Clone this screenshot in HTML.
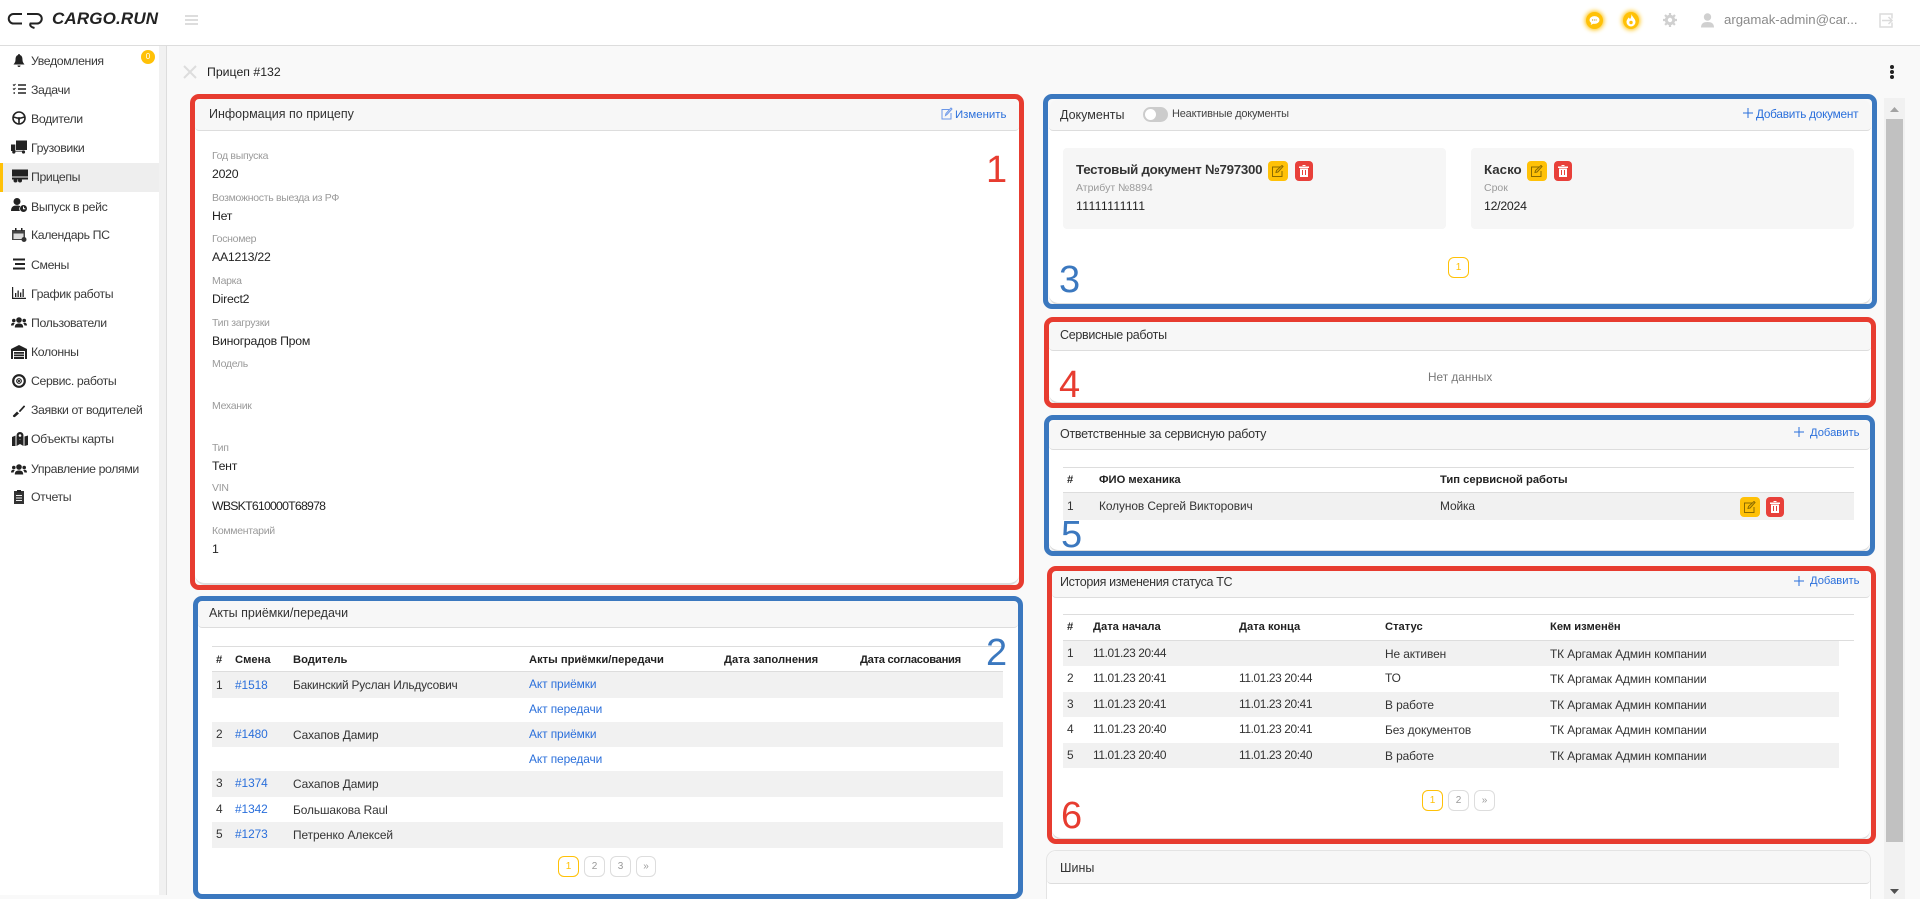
<!DOCTYPE html>
<html lang="ru"><head><meta charset="utf-8"><title>Прицеп #132</title>
<style>
*{box-sizing:border-box}
html,body{margin:0;padding:0;width:1920px;height:899px;overflow:hidden;background:#f9f9f9;font-family:"Liberation Sans","Noto Sans CJK SC",sans-serif;color:#333}
div,span,a,svg{position:absolute}
.t{white-space:nowrap;line-height:20px;height:20px;font-size:12px}
.s{left:31px;font-size:12.3px;color:#3a3a3a;letter-spacing:-.38px}
.i{left:11px;width:16px;height:16px}
.c{background:#fff;border-radius:10px;border-bottom:2px solid #ddd}
.h{left:0;top:0;right:0;background:#f7f7f7;border-bottom:1px solid #ddd;border-radius:10px 10px 4px 4px;box-sizing:border-box}
.f{border:5px solid;border-radius:9px}
.r{border-color:#e73c30}.b{border-color:#3b78bf}
.n{font-size:38px;line-height:40px;height:40px;white-space:nowrap}
.l{left:212px;font-size:10.5px;color:#9a9a9a;letter-spacing:-.3px}
.v{left:212px;font-size:12.3px;color:#222;letter-spacing:-.25px}
.th{font-weight:bold;font-size:11.2px;color:#222}
.td{font-size:11.9px;color:#333;letter-spacing:-.08px}
.d{letter-spacing:-.38px}
.a{color:#2a6fdb;text-decoration:none}
.row{background:#f1f1f1}
.ln{height:1px;background:#ddd}
.p{width:21px;height:21px;border:1px solid #ddd;border-radius:6px;background:#fff;color:#999;font-size:10px;line-height:19px;text-align:center}
.pa{border-color:#ffc107;color:#ffc107}
.by{width:20px;height:20px;background:#ffc107;border-radius:4px}
.br{width:18px;height:20px;background:#e8403a;border-radius:4px}
</style></head><body>

<!-- top bar -->
<div style="left:0;top:0;width:1920px;height:46px;background:#fff;border-bottom:1px solid #ddd"></div>
<svg style="left:6px;top:10px" width="40" height="20" viewBox="0 0 40 20" fill="none" stroke="#222" stroke-width="2"><path d="M16 4H7.500a4.300 4.300 0 0 0 0 9.500H16"/><path d="M21 4h10a4.500 4.500 0 0 1 0 9.500H24.500q-1.500 3 4 4.500"/></svg>
<div class="t" style="left:52px;top:9px;font-size:17px;font-weight:bold;font-style:italic;color:#222;letter-spacing:.15px">CARGO.RUN</div>
<div style="left:185px;top:15px;width:13px;height:10px;border-top:2px solid #ddd;border-bottom:2px solid #ddd"></div>
<div style="left:185px;top:19px;width:13px;height:2px;background:#ddd"></div>

<div style="left:1586px;top:12px;width:17px;height:17px;border-radius:50%;background:#ffc107;box-shadow:0 0 5px 1px #ffc107"></div>
<svg style="left:1589px;top:15px" width="11" height="11" viewBox="0 0 11 11"><ellipse cx="5.500" cy="5" rx="5" ry="3.900" fill="#fff"/><path d="M3 5h5" stroke="#c9a33c" stroke-width="1.200" stroke-dasharray="1 .8"/><path d="M2.500 7.500l-.8 2.500 3-1.500z" fill="#fff"/></svg>
<div style="left:1623px;top:12px;width:16px;height:17px;border-radius:50%;background:#ffc107;box-shadow:0 0 5px 1px #ffc107"></div>
<svg style="left:1625px;top:13px" width="12" height="14" viewBox="0 0 12 14"><path d="M6.500 1C7 4 10.500 5.500 10.500 9a4.500 4.500 0 0 1-9 0C1.500 7 3 5.800 3.500 4.500 4.500 5 5 6 5 6 6 5 6.500 3 6.500 1z" fill="#fff"/><circle cx="6" cy="9.500" r="1.700" fill="#ffc107"/></svg>
<svg style="left:1663px;top:13px" width="14" height="14" viewBox="0 0 14 14"><circle cx="7" cy="7" r="3.700" fill="none" stroke="#d0d0d0" stroke-width="3"/><path d="M7 0v14M0 7h14M2 2l10 10M12 2L2 12" stroke="#d0d0d0" stroke-width="2.200" stroke-dasharray="2.200 9.600"/></svg>
<svg style="left:1700px;top:13px" width="15" height="15" viewBox="0 0 15 15" fill="#d0d0d0"><circle cx="7.500" cy="4" r="3.700"/><path d="M1 14.500c0-4 2.500-5.500 6.500-5.500s6.500 1.500 6.500 5.500z"/></svg>
<div class="t" style="left:1724px;top:10px;font-size:13.2px;color:#8a8a8a">argamak-admin@car...</div>
<svg style="left:1879px;top:13px" width="15" height="15" viewBox="0 0 15 15" fill="none" stroke="#dcdcdc" stroke-width="1.500"><path d="M9 1H1v13h12V9.500M13 5.500V1H9M3 7.500h10M9.500 4l3.500 3.500-3.500 3.500"/></svg>

<!-- sidebar -->
<div style="left:0;top:46px;width:159px;height:849px;background:#fff"></div>
<div style="left:159px;top:46px;width:7px;height:849px;background:#f1f1f1"></div>
<div style="left:166px;top:46px;width:1px;height:849px;background:#ddd"></div>
<div style="left:0;top:163px;width:159px;height:29px;background:#eee"></div>
<div style="left:0;top:163px;width:3px;height:29px;background:#ffc107"></div>
<div style="left:141px;top:50px;width:14px;height:14px;border-radius:50%;background:#ffc107;color:#fff;font-size:8px;line-height:14px;text-align:center">0</div>

<svg class="i" style="top:53px" viewBox="0 0 16 16" fill="#222"><path d="M8 2c-3 0-3.500 2.500-3.500 5 0 2-1 3-2 4.500h11c-1-1.500-2-2.500-2-4.500 0-2.500-.5-5-3.500-5z"/><path d="M6.500 12.500a1.500 1.500 0 0 0 3 0z"/><circle cx="8" cy="2" r="1"/></svg>
<div class="t s" style="top:51px">Уведомления</div>
<svg class="i" style="top:81px" viewBox="0 0 16 16" fill="none" stroke="#222" stroke-width="1.500"><path d="M7 4h8M7 8h8M7 12h8"/><path d="M2 3.500l1 1 1.500-1.500M2 7.500l1 1L4.500 7" stroke-width="1"/><path d="M2.500 12h1.500" stroke-width="1.500"/></svg>
<div class="t s" style="top:80px">Задачи</div>
<svg class="i" style="top:110px" viewBox="0 0 16 16" fill="none" stroke="#222" stroke-width="1.600"><circle cx="8" cy="8" r="6"/><path d="M2.500 7l3.500 1 2 0 2 0 3.500-1M8 9v5"/><circle cx="8" cy="8.500" r="1.300" fill="#222" stroke="none"/></svg>
<div class="t s" style="top:109px">Водители</div>
<svg class="i" style="top:139px" viewBox="0 0 16 16" fill="#222"><rect x="5" y="1.500" width="11" height="9.500"/><path d="M0 5.500h4.300V12H0z"/><circle cx="2.800" cy="13" r="1.600"/><circle cx="12.500" cy="13" r="1.600"/><path d="M3 11.800h10v.8H3z"/></svg>
<div class="t s" style="top:138px">Грузовики</div>
<svg class="i" style="top:168px;left:12px" viewBox="0 0 16 16" fill="#222"><rect x="0" y="1.500" width="16" height="7"/><rect x="0" y="9.500" width="16" height="2"/><circle cx="3.500" cy="12.500" r="2"/><circle cx="8" cy="12.500" r="2"/></svg>
<div class="t s" style="top:167px">Прицепы</div>
<svg class="i" style="top:197px" viewBox="0 0 16 16" fill="#222"><circle cx="6" cy="4.500" r="3.500"/><path d="M0 14c0-4 2-5.500 6-5.500 1.500 0 2.500.3 3.300.7A4 4 0 0 0 9 14z"/><circle cx="12.500" cy="11.500" r="3.500"/><path d="M12.500 9.500v2.300h1.800" stroke="#fff" fill="none"/></svg>
<div class="t s" style="top:197px">Выпуск в рейс</div>
<svg class="i" style="top:227px;left:12px" viewBox="0 0 16 16" fill="#444"><path d="M0 3h13v10H0z"/><path d="M3 1h1.500v3H3zM9 1h1.500v3H9z" fill="#222"/><path d="M1.500 6.500h10V12h-10z" fill="#ddd"/><circle cx="12" cy="12.500" r="2.500" fill="#333"/></svg>
<div class="t s" style="top:225px">Календарь ПС</div>
<svg class="i" style="top:256px" viewBox="0 0 16 16" fill="#222"><path d="M2 2.500h12v2H2zM4 7h10v2H4zM2 11.500h12v2H2z"/></svg>
<div class="t s" style="top:255px">Смены</div>
<svg class="i" style="top:285px" viewBox="0 0 16 16" fill="#222"><path d="M1 2h1.200v10.800H15V14H1zM4 8h1.300v4H4zM6.500 5.500h1.300V12H6.500zM9 7.500h1.300V12H9zM11.500 4h1.300v8h-1.300z"/></svg>
<div class="t s" style="top:284px">График работы</div>
<svg class="i" style="top:314px" viewBox="0 0 16 16" fill="#222"><circle cx="8" cy="6" r="2.800"/><circle cx="2.800" cy="6.500" r="1.800"/><circle cx="13.200" cy="6.500" r="1.800"/><path d="M3.800 13.500c0-3 1.500-4 4.200-4s4.200 1 4.200 4zM0 11.500c0-1.800.8-2.800 2.500-2.800.6 0 1 .1 1.400.4-.8.700-1.200 1.400-1.300 2.400zM16 11.500c0-1.800-.8-2.800-2.500-2.800-.6 0-1 .1-1.400.4.800.7 1.200 1.400 1.300 2.400z"/></svg>
<div class="t s" style="top:313px">Пользователи</div>
<svg class="i" style="top:344px" viewBox="0 0 16 16" fill="#222"><path d="M0 15V5l8-4 8 4v10h-2V7H2v8z"/><path d="M3 8h10v1.800H3zM3 10.500h10v1.800H3zM3 13h10v2H3z"/></svg>
<div class="t s" style="top:342px">Колонны</div>
<svg class="i" style="top:373px" viewBox="0 0 16 16" fill="none" stroke="#222"><circle cx="8" cy="8" r="5.800" stroke-width="2.200"/><circle cx="8" cy="8" r="2.300" stroke-width="1.200"/><circle cx="8" cy="8" r=".6" fill="#222"/></svg>
<div class="t s" style="top:371px">Сервис. работы</div>
<svg class="i" style="top:402px" viewBox="0 0 16 16" fill="#222"><path d="M2 13.500l4-4 2 2-4 3.500c-1 .5-2.500-.5-2-1.500z"/><path d="M8 9l5-5.500 1 1L9 10z" stroke="#222" stroke-width=".4"/></svg>
<div class="t s" style="top:400px">Заявки от водителей</div>
<svg class="i" style="top:431px;left:12px" viewBox="0 0 16 16" fill="#222"><path d="M0 6l3.500-1.500V15L0 15zM4.500 5.500L6 5l2 4 2-4 1.500.5v9.500L8 13l-3.500 2zM12.500 5.500L16 4.500V14l-3.500 1z"/><circle cx="8" cy="4.500" r="3.500"/><circle cx="8" cy="4.500" r="1.300" fill="#fff"/></svg>
<div class="t s" style="top:429px">Объекты карты</div>
<svg class="i" style="top:461px" viewBox="0 0 16 16" fill="#222"><circle cx="8" cy="6" r="2.800"/><circle cx="2.800" cy="6.500" r="1.800"/><circle cx="13.200" cy="6.500" r="1.800"/><path d="M3.800 13.500c0-3 1.500-4 4.200-4s4.200 1 4.200 4zM0 11.500c0-1.800.8-2.800 2.500-2.800.6 0 1 .1 1.400.4-.8.700-1.200 1.400-1.300 2.400zM16 11.500c0-1.800-.8-2.800-2.500-2.800-.6 0-1 .1-1.400.4.800.7 1.200 1.400 1.300 2.400z"/></svg>
<div class="t s" style="top:459px">Управление ролями</div>
<svg class="i" style="top:489px;left:11px" viewBox="0 0 16 16" fill="#333"><path d="M3 2h10v13H3z"/><path d="M6 1h4v2.500H6z" fill="#222"/><path d="M5 6h6v1H5zM5 8.500h6v1H5zM5 11h6v1H5z" fill="#eee"/></svg>
<div class="t s" style="top:487px">Отчеты</div>

<!-- title -->
<svg style="left:183px;top:65px" width="14" height="14" viewBox="0 0 14 14" stroke="#ddd" stroke-width="2"><path d="M1 1l12 12M13 1L1 13"/></svg>
<div class="t" style="left:207px;top:62px;font-size:12.3px;color:#222">Прицеп #132</div>
<div style="left:1890px;top:65px;width:4px;height:4px;border-radius:50%;background:#222"></div>
<div style="left:1890px;top:70px;width:4px;height:4px;border-radius:50%;background:#222"></div>
<div style="left:1890px;top:75px;width:4px;height:4px;border-radius:50%;background:#222"></div>

<!-- scrollbar -->
<div style="left:1884px;top:98px;width:21px;height:801px;background:#f1f1f1"></div>
<div style="left:1886px;top:119px;width:17px;height:723px;background:#c1c1c1"></div>
<svg style="left:1889px;top:106px" width="11" height="7" viewBox="0 0 11 7"><path d="M5.500 1L10 6H1z" fill="#a3a3a3"/></svg>
<svg style="left:1889px;top:888px" width="11" height="7" viewBox="0 0 11 7"><path d="M5.500 6L10 1H1z" fill="#505050"/></svg>

<!-- card 1 -->
<div class="c" style="left:195px;top:99px;width:824px;height:486px"><div class="h" style="height:32px"></div></div>
<div class="t" style="left:209px;top:104px;font-size:12.5px">Информация по прицепу</div>
<svg style="left:941px;top:107px" width="12" height="13" viewBox="0 0 12 13" fill="none" stroke="#6b97e8"><path d="M8 2.500H1v9.500h9V6"/><path d="M4.500 8.500l.5-2L10 1l1 1-5 5.500z"/></svg>
<div class="t a" style="left:955px;top:105px;font-size:11.4px">Изменить</div>
<div class="t l" style="top:146px">Год выпуска</div><div class="t v" style="top:164px">2020</div>
<div class="t l" style="top:188px">Возможность выезда из РФ</div><div class="t v" style="top:206px">Нет</div>
<div class="t l" style="top:229px">Госномер</div><div class="t v" style="top:247px">АА1213/22</div>
<div class="t l" style="top:271px">Марка</div><div class="t v" style="top:289px">Direct2</div>
<div class="t l" style="top:313px">Тип загрузки</div><div class="t v" style="top:331px">Виноградов Пром</div>
<div class="t l" style="top:354px">Модель</div>
<div class="t l" style="top:396px">Механик</div>
<div class="t l" style="top:438px">Тип</div><div class="t v" style="top:456px">Тент</div>
<div class="t l" style="top:478px">VIN</div><div class="t v" style="top:496px;letter-spacing:-.78px">WBSKT610000T68978</div>
<div class="t l" style="top:521px">Комментарий</div><div class="t v" style="top:539px">1</div>

<!-- card 2 -->
<div class="c" style="left:198px;top:600px;width:820px;height:299px"><div class="h" style="height:28px"></div></div>
<div class="t" style="left:209px;top:603px;font-size:12.5px">Акты приёмки/передачи</div>
<div class="ln" style="left:212px;top:646px;width:791px"></div>
<div class="ln" style="left:212px;top:671px;width:791px"></div>
<div class="t th" style="left:216px;top:650px">#</div>
<div class="t th" style="left:235px;top:650px">Смена</div>
<div class="t th" style="left:293px;top:650px">Водитель</div>
<div class="t th" style="left:529px;top:650px">Акты приёмки/передачи</div>
<div class="t th" style="left:724px;top:650px">Дата заполнения</div>
<div class="t th" style="left:860px;top:650px;letter-spacing:-.3px">Дата согласования</div>
<div class="row" style="left:212px;top:672px;width:791px;height:26px"></div>
<div class="row" style="left:212px;top:722px;width:791px;height:25px"></div>
<div class="row" style="left:212px;top:771px;width:791px;height:26px"></div>
<div class="row" style="left:212px;top:822px;width:791px;height:26px"></div>
<div class="t td" style="left:216px;top:675px">1</div><div class="t td a" style="left:235px;top:675px">#1518</div><div class="t td" style="left:293px;top:675px;letter-spacing:-.2px">Бакинский Руслан Ильдусович</div><div class="t td a" style="left:529px;top:674px">Акт приёмки</div>
<div class="t td a" style="left:529px;top:699px">Акт передачи</div>
<div class="t td" style="left:216px;top:724px">2</div><div class="t td a" style="left:235px;top:724px">#1480</div><div class="t td" style="left:293px;top:725px">Сахапов Дамир</div><div class="t td a" style="left:529px;top:724px">Акт приёмки</div>
<div class="t td a" style="left:529px;top:749px">Акт передачи</div>
<div class="t td" style="left:216px;top:773px">3</div><div class="t td a" style="left:235px;top:773px">#1374</div><div class="t td" style="left:293px;top:774px">Сахапов Дамир</div>
<div class="t td" style="left:216px;top:799px">4</div><div class="t td a" style="left:235px;top:799px">#1342</div><div class="t td" style="left:293px;top:800px">Большакова Raul</div>
<div class="t td" style="left:216px;top:824px">5</div><div class="t td a" style="left:235px;top:824px">#1273</div><div class="t td" style="left:293px;top:825px">Петренко Алексей</div>
<div class="p pa" style="left:558px;top:856px">1</div><div class="p" style="left:584px;top:856px">2</div><div class="p" style="left:610px;top:856px">3</div><div class="p" style="left:636px;top:856px;width:20px">»</div>

<!-- card 3 -->
<div class="c" style="left:1049px;top:99px;width:822px;height:206px"><div class="h" style="height:32px"></div></div>
<div class="t" style="left:1060px;top:105px;font-size:12.5px">Документы</div>
<div style="left:1143px;top:107px;width:25px;height:15px;border-radius:8px;background:#ccc"></div>
<div style="left:1145px;top:109px;width:11px;height:11px;border-radius:50%;background:#fff"></div>
<div class="t" style="left:1172px;top:104px;font-size:11px;color:#444;letter-spacing:-.2px">Неактивные документы</div>
<svg style="left:1743px;top:108px" width="10" height="10" viewBox="0 0 10 10" stroke="#2a6fdb" stroke-width="1"><path d="M5 0v10M0 5h10"/></svg>
<div class="t a" style="left:1756px;top:104px;font-size:11.8px;letter-spacing:-.25px">Добавить документ</div>
<div style="left:1063px;top:148px;width:383px;height:81px;background:#f6f6f6;border-radius:4px"></div>
<div style="left:1471px;top:148px;width:383px;height:81px;background:#f6f6f6;border-radius:4px"></div>
<div class="t" style="left:1076px;top:160px;font-size:13.3px;font-weight:bold;color:#333;letter-spacing:-.27px">Тестовый документ №797300</div>
<div class="by" style="left:1268px;top:161px"></div>
<svg style="left:1272px;top:165px" width="12" height="12" viewBox="0 0 12 12" fill="none" stroke="#8a6a00"><path d="M8 2H.5v9.500H10V6"/><path d="M4 7.500l.5-2L10 .5l1 1-5 5.500z"/></svg>
<div class="br" style="left:1295px;top:161px"></div>
<svg style="left:1299px;top:165px" width="10" height="12" viewBox="0 0 10 12"><path d="M0 1.500h10v1.500H0zM3.500 0h3v1h-3zM1 3.500h8V12H1z" fill="#fff"/><path d="M3.500 5v5M6.500 5v5" stroke="#e8403a"/></svg>
<div class="t" style="left:1076px;top:178px;font-size:10.5px;color:#9a9a9a">Атрибут №8894</div>
<div class="t v" style="left:1076px;top:196px;letter-spacing:.3px">11111111111</div>
<div class="t" style="left:1484px;top:160px;font-size:13.3px;font-weight:bold;color:#333">Каско</div>
<div class="by" style="left:1527px;top:161px"></div>
<svg style="left:1531px;top:165px" width="12" height="12" viewBox="0 0 12 12" fill="none" stroke="#8a6a00"><path d="M8 2H.5v9.500H10V6"/><path d="M4 7.500l.5-2L10 .5l1 1-5 5.500z"/></svg>
<div class="br" style="left:1554px;top:161px"></div>
<svg style="left:1558px;top:165px" width="10" height="12" viewBox="0 0 10 12"><path d="M0 1.500h10v1.500H0zM3.500 0h3v1h-3zM1 3.500h8V12H1z" fill="#fff"/><path d="M3.500 5v5M6.500 5v5" stroke="#e8403a"/></svg>
<div class="t" style="left:1484px;top:178px;font-size:10.5px;color:#9a9a9a">Срок</div>
<div class="t v" style="left:1484px;top:196px">12/2024</div>
<div class="p pa" style="left:1448px;top:257px">1</div>

<!-- card 4 -->
<div class="c" style="left:1049px;top:322px;width:822px;height:82px"><div class="h" style="height:29px"></div></div>
<div class="t" style="left:1060px;top:325px;font-size:12.5px;letter-spacing:-.3px">Сервисные работы</div>
<div class="t" style="left:1428px;top:367px;font-size:11.8px;color:#777">Нет данных</div>

<!-- card 5 -->
<div class="c" style="left:1049px;top:420px;width:821px;height:132px"><div class="h" style="height:30px"></div></div>
<div class="t" style="left:1060px;top:424px;font-size:12.5px;letter-spacing:-.26px">Ответственные за сервисную работу</div>
<svg style="left:1794px;top:427px" width="10" height="10" viewBox="0 0 10 10" stroke="#2a6fdb" stroke-width="1"><path d="M5 0v10M0 5h10"/></svg>
<div class="t a" style="left:1810px;top:423px;font-size:11.2px">Добавить</div>
<div class="ln" style="left:1063px;top:467px;width:791px"></div>
<div class="ln" style="left:1063px;top:492px;width:791px"></div>
<div class="t th" style="left:1067px;top:470px">#</div>
<div class="t th" style="left:1099px;top:470px">ФИО механика</div>
<div class="t th" style="left:1440px;top:470px">Тип сервисной работы</div>
<div class="row" style="left:1063px;top:493px;width:791px;height:27px"></div>
<div class="t td" style="left:1067px;top:496px">1</div>
<div class="t td" style="left:1099px;top:496px">Колунов Сергей Викторович</div>
<div class="t td" style="left:1440px;top:496px">Мойка</div>
<div class="by" style="left:1740px;top:497px"></div>
<svg style="left:1744px;top:501px" width="12" height="12" viewBox="0 0 12 12" fill="none" stroke="#8a6a00"><path d="M8 2H.5v9.500H10V6"/><path d="M4 7.500l.5-2L10 .5l1 1-5 5.500z"/></svg>
<div class="br" style="left:1766px;top:497px"></div>
<svg style="left:1770px;top:501px" width="10" height="12" viewBox="0 0 10 12"><path d="M0 1.500h10v1.500H0zM3.500 0h3v1h-3zM1 3.500h8V12H1z" fill="#fff"/><path d="M3.500 5v5M6.500 5v5" stroke="#e8403a"/></svg>

<!-- card 6 -->
<div class="c" style="left:1052px;top:570px;width:818px;height:270px"><div class="h" style="height:28px"></div></div>
<div class="t" style="left:1060px;top:572px;font-size:12.5px;letter-spacing:-.35px">История изменения статуса ТС</div>
<svg style="left:1794px;top:576px" width="10" height="10" viewBox="0 0 10 10" stroke="#2a6fdb" stroke-width="1"><path d="M5 0v10M0 5h10"/></svg>
<div class="t a" style="left:1810px;top:571px;font-size:11.2px">Добавить</div>
<div class="ln" style="left:1063px;top:614px;width:791px"></div>
<div class="ln" style="left:1063px;top:640px;width:791px"></div>
<div class="t th" style="left:1067px;top:617px">#</div>
<div class="t th" style="left:1093px;top:617px">Дата начала</div>
<div class="t th" style="left:1239px;top:617px">Дата конца</div>
<div class="t th" style="left:1385px;top:617px">Статус</div>
<div class="t th" style="left:1550px;top:617px">Кем изменён</div>
<div class="row" style="left:1063px;top:641px;width:776px;height:25px"></div>
<div class="row" style="left:1063px;top:692px;width:776px;height:25px"></div>
<div class="row" style="left:1063px;top:743px;width:776px;height:25px"></div>
<div class="t td" style="left:1067px;top:643px">1</div><div class="t td d" style="left:1093px;top:643px">11.01.23 20:44</div><div class="t td" style="left:1385px;top:644px">Не активен</div><div class="t td" style="left:1550px;top:644px">ТК Аргамак Админ компании</div>
<div class="t td" style="left:1067px;top:668px">2</div><div class="t td d" style="left:1093px;top:668px">11.01.23 20:41</div><div class="t td d" style="left:1239px;top:668px">11.01.23 20:44</div><div class="t td" style="left:1385px;top:668px">ТО</div><div class="t td" style="left:1550px;top:669px">ТК Аргамак Админ компании</div>
<div class="t td" style="left:1067px;top:694px">3</div><div class="t td d" style="left:1093px;top:694px">11.01.23 20:41</div><div class="t td d" style="left:1239px;top:694px">11.01.23 20:41</div><div class="t td" style="left:1385px;top:695px">В работе</div><div class="t td" style="left:1550px;top:695px">ТК Аргамак Админ компании</div>
<div class="t td" style="left:1067px;top:719px">4</div><div class="t td d" style="left:1093px;top:719px">11.01.23 20:40</div><div class="t td d" style="left:1239px;top:719px">11.01.23 20:41</div><div class="t td" style="left:1385px;top:720px">Без документов</div><div class="t td" style="left:1550px;top:720px">ТК Аргамак Админ компании</div>
<div class="t td" style="left:1067px;top:745px">5</div><div class="t td d" style="left:1093px;top:745px">11.01.23 20:40</div><div class="t td d" style="left:1239px;top:745px">11.01.23 20:40</div><div class="t td" style="left:1385px;top:746px">В работе</div><div class="t td" style="left:1550px;top:746px">ТК Аргамак Админ компании</div>
<div class="p pa" style="left:1422px;top:790px">1</div><div class="p" style="left:1448px;top:790px">2</div><div class="p" style="left:1474px;top:790px">»</div>

<!-- card 7: clipped exactly at the page bottom -->
<div style="left:1046px;top:850px;width:825px;height:49px;background:#fff;border:1px solid #e4e4e4;border-bottom:0;border-radius:10px 10px 0 0"><div class="h" style="height:33px"></div></div>
<div class="t" style="left:1060px;top:858px;font-size:12.5px">Шины</div>

<!-- annotation frames -->
<div class="f r" style="left:190px;top:94px;width:834px;height:496px"></div>
<div class="f b" style="left:193px;top:596px;width:830px;height:303px"></div>
<div class="f b" style="left:1043px;top:94px;width:834px;height:215px"></div>
<div class="f r" style="left:1044px;top:317px;width:832px;height:91px"></div>
<div class="f b" style="left:1044px;top:415px;width:831px;height:141px"></div>
<div class="f r" style="left:1047px;top:566px;width:829px;height:278px"></div>
<div class="n" style="left:986px;top:150px;color:#e73c30">1</div>
<div class="n" style="left:986px;top:633px;color:#3b78bf">2</div>
<div class="n" style="left:1059px;top:260px;color:#3b78bf">3</div>
<div class="n" style="left:1059px;top:365px;color:#e73c30">4</div>
<div class="n" style="left:1061px;top:515px;color:#3b78bf">5</div>
<div class="n" style="left:1061px;top:796px;color:#e73c30">6</div>
</body></html>
